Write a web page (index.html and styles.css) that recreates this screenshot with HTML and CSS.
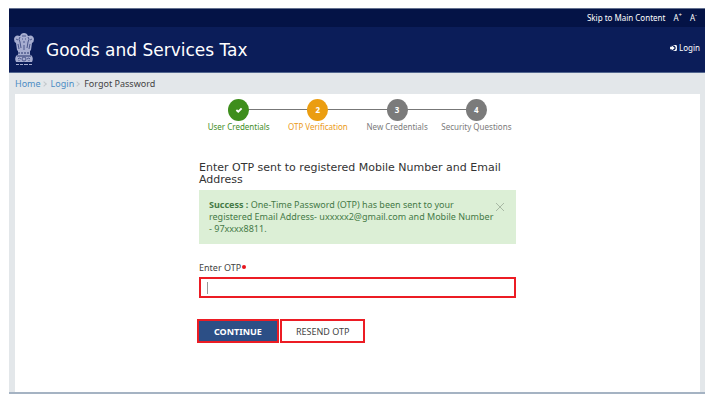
FILE: index.html
```html
<!DOCTYPE html>
<html lang="en">
<head>
    <meta charset="UTF-8">
    <meta name="viewport" content="width=device-width, initial-scale=1.0">
    <title>Goods and Services Tax</title>
    <link rel="stylesheet" href="styles.css">
</head>
<body>
    <div class="page">
        <div class="topbar">
            <a href="#main">Skip to Main Content</a>
            <button type="button" aria-label="Increase text size">A<sup>+</sup></button>
            <button type="button" aria-label="Decrease text size">A<sup>-</sup></button>
        </div>
        <header class="header">
            <svg class="emblem" viewBox="0 0 20 34" aria-hidden="true">
                <g fill="#a6add0">
                    <path d="M6 3Q7 0 10 0Q13 0 14 3Q19 1 20 6Q20 9 18 10L17 17Q15 20 10 20Q5 20 3 17L2 10Q0 9 0 6Q1 1 6 3Z"/>
                    <path d="M4 18H16V22H4Z"/>
                    <path d="M3 22Q10 20 17 22Q20 25 18 29H2Q0 25 3 22Z"/>
                    <path d="M2 31H5V32H2ZM6 31H9V32H6ZM10 31H14V32H10ZM15 31H18V32H15Z"/>
                </g>
                <g fill="none" stroke="#4a568b">
                    <path d="M6 4Q4 6 6 9L7 15M14 4Q16 6 14 9L13 15M8 3H12M8 6H9M11 6H12M9 9H11M2 6L4 7M18 6L16 7M10 12V17M4 11L5 16M16 11L15 16"/>
                    <path stroke="#26356f" d="M4 20H6M8 19V21M10 20H12M14 19V21M3 23H17"/>
                    <circle cx="10" cy="26" r="2"/>
                    <path d="M4 26Q5 24 7 26M13 26Q15 24 16 26M5 28V27M15 28V27"/>
                </g>
            </svg>
            <h1>Goods and Services Tax</h1>
            <a class="login" href="#">
                <svg viewBox="0 0 16 14" aria-hidden="true"><path fill="#fff" d="M0 4H4V1L11 7L4 13V10H0ZM8 0H13Q16 0 16 3V11Q16 14 13 14H8V12H11L13 9V5L11 2H8Z"/></svg>
                Login
            </a>
        </header>
        <div class="body">
            <nav class="breadcrumb" aria-label="Breadcrumb">
                <a href="#">Home</a><i></i><a href="#">Login</a><i></i><span>Forgot Password</span>
            </nav>
            <main class="content" id="main">
                <div class="column">
                    <ol class="steps">
                        <li class="done">
                            <b><svg viewBox="0 0 10 8" aria-hidden="true"><path fill="none" stroke="#fff" stroke-width="2.4" d="M1.5 4L4 6.3L8.5 1.7"/></svg></b>
                            User Credentials
                        </li>
                        <li class="active"><b>2</b>OTP Verification</li>
                        <li><b>3</b>New Credentials</li>
                        <li><b>4</b>Security Questions</li>
                    </ol>
                    <h2>Enter OTP sent to registered Mobile Number and Email Address</h2>
                    <div class="alert" role="status">
                        <p><strong>Success :</strong> One-Time Password (OTP) has been sent to your registered Email Address- uxxxxx2@gmail.com and Mobile Number - 97xxxx8811.</p>
                        <button type="button" class="close" aria-label="Close">
                            <svg viewBox="0 0 8 8" aria-hidden="true"><path fill="none" stroke="#a9b9a5" d="M0 0L8 8M8 0L0 8"/></svg>
                        </button>
                    </div>
                    <form>
                        <label for="otp">Enter OTP<span class="required"></span></label>
                        <div class="field">
                            <span class="caret"></span>
                            <input type="text" id="otp" autocomplete="off">
                        </div>
                        <div class="buttons">
                            <button type="submit" class="btn primary">CONTINUE</button>
                            <button type="button" class="btn">RESEND OTP</button>
                        </div>
                    </form>
                </div>
            </main>
        </div>
    </div>
</body>
</html>
```
FILE: styles.css
```css
* {
    box-sizing: border-box;
}
body {
    margin: 8px 6px 7px 9px;
    font-family: "Noto Sans", Verdana, sans-serif;
    font-size: 9px;
    color: #444;
    background: #fff;
}
a {
    text-decoration: none;
}
button {
    font-family: inherit;
    cursor: pointer;
}
.page {
    display: flex;
    flex-direction: column;
    min-height: calc(100vh - 15px);
    border-bottom: 2px solid #a5b3c3;
}
.topbar {
    display: flex;
    justify-content: flex-end;
    align-items: center;
    gap: 8px;
    height: 19px;
    padding: 0 8px 2px 0;
    background: #041346;
    border-top: 1px solid #63708f;
}
.topbar a,
.topbar button {
    font-size: 8px;
    color: #fff;
}
.topbar button {
    padding: 0;
    border: none;
    background: none;
}
.topbar sup {
    font-size: 6px;
    line-height: 0;
}
.header {
    display: flex;
    align-items: center;
    height: 46px;
    padding: 0 5px;
    background: #0b1d59;
    border-bottom: 1px solid #52668f;
}
.emblem {
    width: 20px;
    height: 34px;
}
.header h1 {
    margin: 0 auto 0 12px;
    font-family: "DejaVu Sans", Verdana, sans-serif;
    font-size: 17px;
    font-weight: normal;
    color: #fff;
}
.login {
    display: flex;
    align-items: center;
    gap: 2px;
    padding-bottom: 4px;
    font-size: 8px;
    line-height: 10px;
    color: #fff;
}
.login svg {
    width: 7px;
    height: 6px;
}
.body {
    display: flex;
    flex-direction: column;
    flex: 1;
    padding: 0 5px 0 6px;
    background: #e3e7ea;
}
.breadcrumb {
    display: flex;
    align-items: center;
    height: 21px;
}
.breadcrumb a {
    color: #4b8cc4;
}
.breadcrumb i {
    width: 4px;
    height: 4px;
    margin: 0 5px 0 1px;
    border: solid #c3c8cc;
    border-width: 1px 1px 0 0;
    transform: rotate(45deg);
}
.content {
    flex: 1;
    padding: 5px 10px 0;
    background: #fff;
}
.column {
    max-width: 317px;
    margin: 0 auto;
}
.steps {
    display: grid;
    grid-template-columns: repeat(4, 1fr);
    margin: 0 0 30px;
    padding: 0;
    font-size: 8px;
    list-style: none;
}
.steps li {
    position: relative;
    display: flex;
    flex-direction: column;
    align-items: center;
    gap: 1px;
    line-height: 10px;
    white-space: nowrap;
    color: #7b7b7b;
}
.steps li + li::before {
    content: "";
    position: absolute;
    top: 10px;
    right: 50%;
    width: 100%;
    height: 1px;
    background: #777;
}
.steps b {
    position: relative;
    z-index: 1;
    display: flex;
    align-items: center;
    justify-content: center;
    width: 21px;
    height: 22px;
    border-radius: 50%;
    color: #fff;
    background: #7b7b7b;
}
.steps svg {
    width: 8px;
    height: 6px;
}
.steps .done {
    color: #438e27;
}
.steps .done b {
    background: #3e8e1c;
}
.steps .active {
    color: #eb9a18;
}
.steps .active b {
    background: #eb9d10;
}
h2 {
    margin: 0 0 4px;
    font-family: "DejaVu Sans", Verdana, sans-serif;
    font-size: 11px;
    font-weight: normal;
    line-height: 12px;
    color: #333;
}
.alert {
    display: flex;
    align-items: flex-start;
    padding: 9px 10px;
    color: #457a47;
    background: #dcefd6;
}
.alert p {
    flex: 1;
    margin: 0;
    line-height: 12px;
}
.close {
    width: 10px;
    height: 12px;
    padding: 3px 0 0;
    border: none;
    background: none;
}
.close svg {
    display: block;
    width: 8px;
    height: 8px;
}
label {
    display: flex;
    align-items: center;
    margin-top: 19px;
    line-height: 10px;
}
.required {
    width: 4px;
    height: 4px;
    margin: 0 0 2px 1px;
    border-radius: 50%;
    background: #e8141c;
}
.field {
    display: flex;
    align-items: center;
    height: 21px;
    margin-top: 4px;
    padding: 0 6px;
    border: 2px solid #ec1c24;
}
.caret {
    width: 1px;
    height: 12px;
    background: #999;
}
.field input {
    flex: 1;
    min-width: 0;
    padding: 0;
    font-size: 9px;
    border: none;
    outline: none;
    background: none;
}
.buttons {
    display: flex;
    gap: 1px;
    margin: 21px 0 0 -2px;
}
.btn {
    height: 24px;
    padding: 0 14px;
    font-size: 9px;
    color: #444;
    background: #fff;
    border: 2px solid #ec1c24;
}
.btn.primary {
    padding: 0 15px;
    font-weight: bold;
    color: #fff;
    background: #2c4f86;
}
```
